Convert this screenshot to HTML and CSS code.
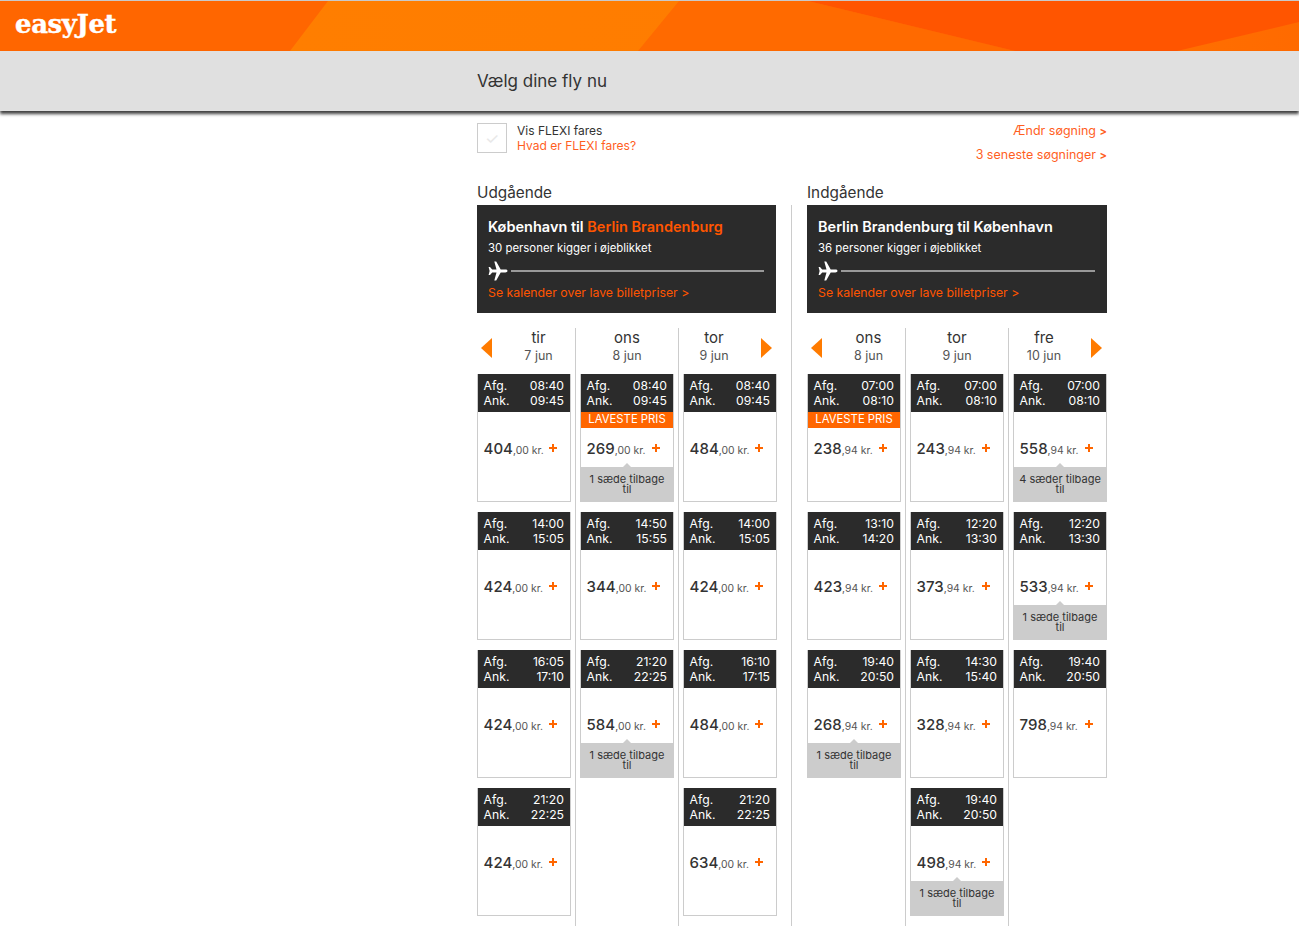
FILE: index.html
```html
<!DOCTYPE html>
<html lang="da">
<head>
<meta charset="utf-8">
<title>easyJet - Vælg dine fly nu</title>
<link rel="stylesheet" href="styles.css">
</head>
<body>
<header class="brand">
  <svg class="brand-bg" viewBox="0 0 1299 50" preserveAspectRatio="none" aria-hidden="true">
    <defs>
      <linearGradient id="mid" x1="0" x2="1" y1="0" y2="0">
        <stop offset="0" stop-color="#ff7e00"/><stop offset="0.55" stop-color="#ff7c00"/><stop offset="1" stop-color="#ff6a00"/>
      </linearGradient>
    </defs>
    <rect width="1299" height="50" fill="#ff6600"/>
    <polygon points="328,0 290,50 1299,50 1299,0" fill="url(#mid)"/>
    <polygon points="679,0 638,50 1015,50 808,0" fill="#ff6a00"/>
    <polygon points="808,0 1299,0 1299,21 1177,50 1015,50" fill="#ff5500"/>
  </svg>
  <span class="logo">easyJet</span>
</header>
<div class="titlebar"><h1>Vælg dine fly nu</h1></div>
<main class="page">
  <section class="options">
    <div class="flexi">
      <span class="checkbox">✓</span>
      <div class="flexi-text">
        <div>Vis FLEXI fares</div>
        <a class="link">Hvad er FLEXI fares?</a>
      </div>
    </div>
    <div class="search-links">
      <a class="link">Ændr søgning <b>&gt;</b></a>
      <a class="link">3 seneste søgninger <b>&gt;</b></a>
    </div>
  </section>
  <div class="journeys">
    <section class="journey">
      <h2>Udgående</h2>
      <div class="route">
        <h3>København til <em>Berlin Brandenburg</em></h3>
        <p>30 personer kigger i øjeblikket</p>
        <div class="path">
          <svg class="plane" viewBox="0 0 20 20"><path d="M19.5 10c0-.9-1-1.400-2.200-1.400h-4.600L8.200.5H6.300l2.200 8.100H4.200L2 6H.6l1 4-1 4H2l2.200-2.600h4.300l-2.200 8.100h1.900l4.500-8.100h4.600c1.200 0 2.200-.5 2.200-1.400z"/></svg>
          <span class="path-line"></span>
        </div>
        <a class="cal">Se kalender over lave billetpriser &gt;</a>
      </div>
      <div class="days">
        <div class="day first">
          <div class="day-head"><span class="arrow left"></span><div class="day-label"><strong>tir</strong><span>7 jun</span></div></div>
          <article class="card"><div class="times"><div><span>Afg.</span><span>08:40</span></div><div><span>Ank.</span><span>09:45</span></div></div><div class="price"><span><b>404</b>,00 kr.</span><i class="plus"></i></div></article>
          <article class="card"><div class="times"><div><span>Afg.</span><span>14:00</span></div><div><span>Ank.</span><span>15:05</span></div></div><div class="price"><span><b>424</b>,00 kr.</span><i class="plus"></i></div></article>
          <article class="card"><div class="times"><div><span>Afg.</span><span>16:05</span></div><div><span>Ank.</span><span>17:10</span></div></div><div class="price"><span><b>424</b>,00 kr.</span><i class="plus"></i></div></article>
          <article class="card"><div class="times"><div><span>Afg.</span><span>21:20</span></div><div><span>Ank.</span><span>22:25</span></div></div><div class="price"><span><b>424</b>,00 kr.</span><i class="plus"></i></div></article>
        </div>
        <div class="day">
          <div class="day-head"><div class="day-label"><strong>ons</strong><span>8 jun</span></div></div>
          <article class="card"><div class="times"><div><span>Afg.</span><span>08:40</span></div><div><span>Ank.</span><span>09:45</span></div></div><div class="badge">LAVESTE PRIS</div><div class="price"><span><b>269</b>,00 kr.</span><i class="plus"></i></div><div class="seats">1 sæde tilbage til</div></article>
          <article class="card"><div class="times"><div><span>Afg.</span><span>14:50</span></div><div><span>Ank.</span><span>15:55</span></div></div><div class="price"><span><b>344</b>,00 kr.</span><i class="plus"></i></div></article>
          <article class="card"><div class="times"><div><span>Afg.</span><span>21:20</span></div><div><span>Ank.</span><span>22:25</span></div></div><div class="price"><span><b>584</b>,00 kr.</span><i class="plus"></i></div><div class="seats">1 sæde tilbage til</div></article>
        </div>
        <div class="day last">
          <div class="day-head"><div class="day-label"><strong>tor</strong><span>9 jun</span></div><span class="arrow right"></span></div>
          <article class="card"><div class="times"><div><span>Afg.</span><span>08:40</span></div><div><span>Ank.</span><span>09:45</span></div></div><div class="price"><span><b>484</b>,00 kr.</span><i class="plus"></i></div></article>
          <article class="card"><div class="times"><div><span>Afg.</span><span>14:00</span></div><div><span>Ank.</span><span>15:05</span></div></div><div class="price"><span><b>424</b>,00 kr.</span><i class="plus"></i></div></article>
          <article class="card"><div class="times"><div><span>Afg.</span><span>16:10</span></div><div><span>Ank.</span><span>17:15</span></div></div><div class="price"><span><b>484</b>,00 kr.</span><i class="plus"></i></div></article>
          <article class="card"><div class="times"><div><span>Afg.</span><span>21:20</span></div><div><span>Ank.</span><span>22:25</span></div></div><div class="price"><span><b>634</b>,00 kr.</span><i class="plus"></i></div></article>
        </div>
      </div>
    </section>
    <section class="journey">
      <h2>Indgående</h2>
      <div class="route">
        <h3>Berlin Brandenburg til København</h3>
        <p>36 personer kigger i øjeblikket</p>
        <div class="path">
          <svg class="plane" viewBox="0 0 20 20"><path d="M19.5 10c0-.9-1-1.400-2.200-1.400h-4.600L8.200.5H6.300l2.200 8.100H4.200L2 6H.6l1 4-1 4H2l2.200-2.600h4.300l-2.200 8.100h1.900l4.500-8.100h4.600c1.200 0 2.200-.5 2.200-1.400z"/></svg>
          <span class="path-line"></span>
        </div>
        <a class="cal">Se kalender over lave billetpriser &gt;</a>
      </div>
      <div class="days">
        <div class="day first">
          <div class="day-head"><span class="arrow left"></span><div class="day-label"><strong>ons</strong><span>8 jun</span></div></div>
          <article class="card"><div class="times"><div><span>Afg.</span><span>07:00</span></div><div><span>Ank.</span><span>08:10</span></div></div><div class="badge">LAVESTE PRIS</div><div class="price"><span><b>238</b>,94 kr.</span><i class="plus"></i></div></article>
          <article class="card"><div class="times"><div><span>Afg.</span><span>13:10</span></div><div><span>Ank.</span><span>14:20</span></div></div><div class="price"><span><b>423</b>,94 kr.</span><i class="plus"></i></div></article>
          <article class="card"><div class="times"><div><span>Afg.</span><span>19:40</span></div><div><span>Ank.</span><span>20:50</span></div></div><div class="price"><span><b>268</b>,94 kr.</span><i class="plus"></i></div><div class="seats">1 sæde tilbage til</div></article>
        </div>
        <div class="day">
          <div class="day-head"><div class="day-label"><strong>tor</strong><span>9 jun</span></div></div>
          <article class="card"><div class="times"><div><span>Afg.</span><span>07:00</span></div><div><span>Ank.</span><span>08:10</span></div></div><div class="price"><span><b>243</b>,94 kr.</span><i class="plus"></i></div></article>
          <article class="card"><div class="times"><div><span>Afg.</span><span>12:20</span></div><div><span>Ank.</span><span>13:30</span></div></div><div class="price"><span><b>373</b>,94 kr.</span><i class="plus"></i></div></article>
          <article class="card"><div class="times"><div><span>Afg.</span><span>14:30</span></div><div><span>Ank.</span><span>15:40</span></div></div><div class="price"><span><b>328</b>,94 kr.</span><i class="plus"></i></div></article>
          <article class="card"><div class="times"><div><span>Afg.</span><span>19:40</span></div><div><span>Ank.</span><span>20:50</span></div></div><div class="price"><span><b>498</b>,94 kr.</span><i class="plus"></i></div><div class="seats">1 sæde tilbage til</div></article>
        </div>
        <div class="day last">
          <div class="day-head"><div class="day-label"><strong>fre</strong><span>10 jun</span></div><span class="arrow right"></span></div>
          <article class="card"><div class="times"><div><span>Afg.</span><span>07:00</span></div><div><span>Ank.</span><span>08:10</span></div></div><div class="price"><span><b>558</b>,94 kr.</span><i class="plus"></i></div><div class="seats">4 sæder tilbage til</div></article>
          <article class="card"><div class="times"><div><span>Afg.</span><span>12:20</span></div><div><span>Ank.</span><span>13:30</span></div></div><div class="price"><span><b>533</b>,94 kr.</span><i class="plus"></i></div><div class="seats">1 sæde tilbage til</div></article>
          <article class="card"><div class="times"><div><span>Afg.</span><span>19:40</span></div><div><span>Ank.</span><span>20:50</span></div></div><div class="price"><span><b>798</b>,94 kr.</span><i class="plus"></i></div></article>
        </div>
      </div>
    </section>
  </div>
</main>
</body>
</html>
```

FILE: styles.css
```css
* { box-sizing: border-box; }
html, body { margin: 0; padding: 0; }
body {
  background: #fff;
  color: #333;
  font-family: Inter, "Noto Sans", sans-serif;
  font-size: 12px;
  overflow: hidden;
}
.brand {
  position: relative;
  height: 51px;
  border-top: 1px solid #c9c9c9;
  display: flex;
  align-items: center;
  padding-left: 15px;
}
.brand-bg {
  position: absolute;
  inset: 0;
  width: 100%;
  height: 100%;
}
.logo {
  position: relative;
  margin-top: -5px;
  color: #fff;
  font-family: "DejaVu Serif", serif;
  font-weight: 700;
  font-size: 26px;
  letter-spacing: -0.4px;
  -webkit-text-stroke: 0.4px #fff;
}
.titlebar {
  height: 60px;
  background: #e0e0e0;
  padding-left: 477px;
  display: flex;
  align-items: center;
  box-shadow: 0 3px 3px rgba(0, 0, 0, 0.75);
  position: relative;
}
.titlebar h1 {
  margin: 0;
  font-size: 17px;
  font-weight: 400;
  color: #333;
}
.page {
  margin-left: 477px;
  width: 630px;
}
.options {
  display: flex;
  justify-content: space-between;
  padding-top: 12px;
  height: 67px;
}
.flexi { display: flex; gap: 10px; }
.checkbox {
  width: 30px;
  height: 30px;
  border: 1px solid #ccc;
  color: #e8e8e8;
  font-size: 16px;
  display: flex;
  align-items: center;
  justify-content: center;
}
.flexi-text { line-height: 15px; }
.link { color: #ff5f1f; }
.flexi-text .link { font-size: 12.05px; }
.search-links {
  display: flex;
  flex-direction: column;
  align-items: flex-end;
  gap: 8px;
  font-size: 12.5px;
  line-height: 15px;
}
.search-links b { font-size: 11px; }
.journeys {
  display: flex;
  gap: 30px;
  position: relative;
}
.journeys::before {
  content: "";
  position: absolute;
  left: 314px;
  top: 27px;
  bottom: 0;
  width: 1px;
  background: #ccc;
}
.journey { width: 300px; }
.journey h2 {
  margin: 0;
  height: 27px;
  font-size: 15.3px;
  line-height: 30px;
  font-weight: 400;
  color: #333;
}
.route {
  width: 300px;
  height: 108px;
  background: #2b2b2b;
  color: #fff;
  padding: 12px 12px 0 11px;
}
.journey:first-child .route { width: 299px; }
.route h3 {
  margin: 0;
  font-size: 14.5px;
  line-height: 20px;
  font-weight: 600;
}
.route h3 em { font-style: normal; color: #ff5500; }
.route p {
  margin: 4px 0 0;
  font-size: 11.4px;
  line-height: 15px;
}
.path {
  display: flex;
  align-items: center;
  gap: 3px;
  margin-top: 5px;
  height: 20px;
}
.plane { width: 20px; height: 20px; fill: #fff; flex: none; }
.path-line { flex: 1; height: 2px; margin-top: -1px; background: #999; }
.cal {
  display: block;
  margin-top: 4px;
  color: #ff5500;
  font-size: 12.3px;
  line-height: 16px;
}
.days { display: flex; margin-top: 15px; }
.day {
  width: 103px;
  padding: 0 4px;
  border-right: 1px solid #ccc;
}
.day.first { width: 99px; padding-left: 0; }
.day.last { width: 98px; border-right: 0; padding-right: 0; }
.day-head {
  display: flex;
  height: 46px;
  align-items: flex-start;
  margin: 0 -4px;
}
.first .day-head { margin-left: 0; }
.last .day-head { margin-right: 0; }
.day-label {
  flex: 1;
  display: flex;
  flex-direction: column;
  align-items: center;
  text-align: center;
  padding-top: 1px;
}
.day-label strong {
  font-size: 15px;
  font-weight: 400;
  line-height: 18px;
  color: #333;
}
.day-label span {
  font-size: 12.5px;
  line-height: 17px;
  color: #555;
}
.arrow {
  flex: none;
  width: 0;
  height: 0;
  margin-top: 10px;
  border-style: solid;
  border-color: transparent;
}
.arrow.left {
  border-width: 10px 11px 10px 0;
  border-right-color: #ff7b00;
  margin-left: 4px;
  margin-right: 10px;
}
.arrow.right {
  border-width: 10px 0 10px 11px;
  border-left-color: #ff7b00;
  margin-left: 12px;
  margin-right: 5px;
}
.card {
  position: relative;
  width: 94px;
  height: 128px;
  margin-bottom: 10px;
  border: 1px solid #ccc;
  border-top: 0;
  display: flex;
  flex-direction: column;
}
.times {
  height: 38px;
  background: #2b2b2b;
  color: #fff;
  padding: 4px 6px 0 5.6px;
  font-size: 12.2px;
  line-height: 15px;
}
.times div { display: flex; justify-content: space-between; }
.badge {
  position: absolute;
  left: 0;
  right: 0;
  top: 38px;
  height: 16px;
  background: #ff6600;
  color: #fff;
  text-align: center;
  font-size: 11.3px;
  line-height: 15px;
}
.price {
  display: flex;
  justify-content: space-between;
  align-items: center;
  height: 20px;
  margin-top: 26px;
  padding: 0 13px 0 5.6px;
  font-size: 10.4px;
  color: #555;
}
.price b {
  font-size: 15px;
  font-weight: 500;
  color: #333;
}
.plus {
  width: 8px;
  height: 8px;
  margin-top: 0;
  background:
    linear-gradient(#ff6600, #ff6600) center / 8px 2px no-repeat,
    linear-gradient(#ff6600, #ff6600) center / 2px 8px no-repeat;
}
.seats {
  position: absolute;
  left: -1px;
  right: -1px;
  bottom: -1px;
  height: 35px;
  background: #ccc;
  color: #333;
  text-align: center;
  font-size: 11px;
  line-height: 10px;
  padding: 7px 5px 0;
}
.seats::before {
  content: "";
  position: absolute;
  left: 50%;
  top: -4px;
  margin-left: -4px;
  border-style: solid;
  border-width: 0 4px 4px;
  border-color: transparent transparent #ccc;
}
```
